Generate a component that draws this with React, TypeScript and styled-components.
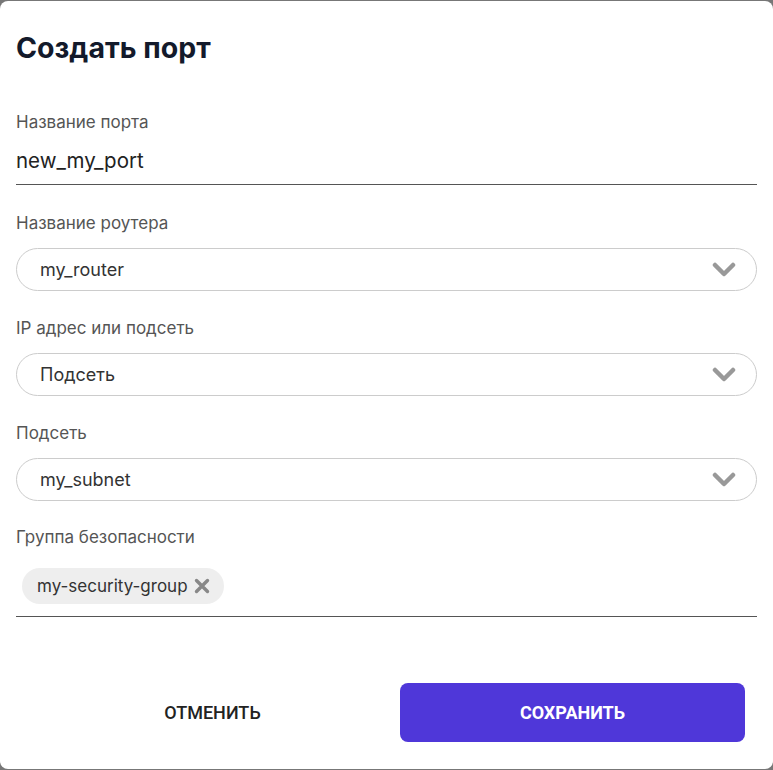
import React from 'react';
import styled, { createGlobalStyle } from 'styled-components';

const Global = createGlobalStyle`
  html, body {
    margin: 0;
    padding: 0;
    background: #777777;
  }
  body {
    font-family: Inter, "Noto Sans", sans-serif;
  }
`;

const Dialog = styled.div`
  box-sizing: border-box;
  margin-top: 1px;
  width: 773px;
  height: 768px;
  background: #ffffff;
  border-radius: 8px;
  padding: 30px 16px 0 16px;
  display: flex;
  flex-direction: column;
`;

const Title = styled.h1`
  margin: 0;
  font-size: 28.5px;
  line-height: 34px;
  font-weight: 700;
  color: #131a2b;
`;

const Field = styled.div<{ $top: number }>`
  display: flex;
  flex-direction: column;
  margin-top: ${p => p.$top}px;
`;

const Label = styled.label<{ $gap: number }>`
  font-size: 17px;
  line-height: 20px;
  color: #555555;
  margin-bottom: ${p => p.$gap}px;
`;

const TextInput = styled.div`
  font-size: 20.5px;
  line-height: 24px;
  color: #222222;
  padding-bottom: 11px;
  border-bottom: 1px solid #555555;
`;

const Select = styled.div`
  box-sizing: border-box;
  height: 43px;
  border: 1px solid #cccccc;
  border-radius: 22px;
  display: flex;
  align-items: center;
  justify-content: space-between;
  padding: 0 20px 0 23px;
  font-size: 18px;
  color: #333333;
`;

const TagBox = styled.div`
  display: flex;
  padding: 0 0 12px 6px;
  border-bottom: 1px solid #555555;
`;

const Chip = styled.div`
  height: 36px;
  display: flex;
  align-items: center;
  gap: 6px;
  padding: 0 14px 0 15px;
  background: #eeeeee;
  border-radius: 18px;
  font-size: 17px;
  color: #333333;
`;

const Footer = styled.div`
  display: grid;
  grid-template-columns: 1fr 1fr;
  gap: 15px;
  margin-top: 66px;
  padding: 0 12px 0 24px;
`;

const Button = styled.button<{ $primary?: boolean }>`
  height: 59px;
  border: none;
  border-radius: 8px;
  font-family: Roboto, "Noto Sans", sans-serif;
  font-size: 18px;
  font-weight: ${p => (p.$primary ? 700 : 500)};
  text-transform: uppercase;
  background: ${p => (p.$primary ? '#4f37d9' : 'transparent')};
  color: ${p => (p.$primary ? '#ffffff' : '#222222')};
  cursor: pointer;
`;

const Chevron = () => (
  <svg width="24" height="16" viewBox="0 0 24 16">
    <polyline points="3,3 12,12 21,3" fill="none" stroke="#999999" strokeWidth="4.5" strokeLinecap="round" strokeLinejoin="round" />
  </svg>
);

const Cross = () => (
  <svg width="16" height="16" viewBox="0 0 16 16">
    <path d="M2.5 2.5 L13.5 13.5 M13.5 2.5 L2.5 13.5" stroke="#888888" strokeWidth="3.4" strokeLinecap="round" />
  </svg>
);

const selects = [
  { label: 'Название роутера', value: 'my_router' },
  { label: 'IP адрес или подсеть', value: 'Подсеть' },
  { label: 'Подсеть', value: 'my_subnet' },
];

export default function App() {
  return (
    <>
      <Global />
      <Dialog>
        <Title>Создать порт</Title>
        <Field $top={47}>
          <Label $gap={17}>Название порта</Label>
          <TextInput>new_my_port</TextInput>
        </Field>
        {selects.map((s, i) => (
          <Field key={s.label} $top={i === 0 ? 28 : 27}>
            <Label $gap={15}>{s.label}</Label>
            <Select>
              <span>{s.value}</span>
              <Chevron />
            </Select>
          </Field>
        ))}
        <Field $top={26}>
          <Label $gap={21}>Группа безопасности</Label>
          <TagBox>
            <Chip>
              my-security-group
              <Cross />
            </Chip>
          </TagBox>
        </Field>
        <Footer>
          <Button>Отменить</Button>
          <Button $primary>Сохранить</Button>
        </Footer>
      </Dialog>
    </>
  );
}
